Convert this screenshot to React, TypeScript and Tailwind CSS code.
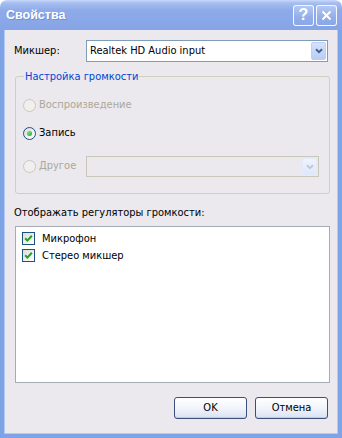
import React from "react";

const bodyBg = "bg-[#ebe9ed]";

function DropArrow({ disabled }: { disabled?: boolean }) {
  return (
    <span
      className={`flex w-[15px] items-center justify-center rounded-[2px] border ${
        disabled
          ? "border-[#e1eafb] bg-[linear-gradient(180deg,#eef3fd,#dfe8fb)]"
          : "border-[#bccff7] bg-[linear-gradient(180deg,#d4e2fd,#b7cdf6)]"
      }`}
    >
      <svg width="8" height="6" viewBox="0 0 8 6">
        <path
          d="M1 1.2 L4 4.2 L7 1.2"
          fill="none"
          stroke={disabled ? "#c1c9d8" : "#4d6185"}
          strokeWidth="2"
        />
      </svg>
    </span>
  );
}

interface ComboProps {
  value?: string;
  disabled?: boolean;
  className?: string;
}

function Combo({ value, disabled, className }: ComboProps) {
  return (
    <div
      className={`flex border p-px ${
        disabled ? "border-[#c9c7ba] bg-[#ebe9ed]" : "border-[#7f9db9] bg-white"
      } ${className ?? ""}`}
    >
      <span className="flex-1 truncate pl-[2px] leading-[18px]">{value}</span>
      <DropArrow disabled={disabled} />
    </div>
  );
}

function Radio({ checked, disabled }: { checked?: boolean; disabled?: boolean }) {
  return (
    <span
      className={`flex h-[13px] w-[13px] shrink-0 items-center justify-center rounded-full border ${
        disabled
          ? "border-[#cac8bb] bg-[#f1f0ef]"
          : "border-[#1c5180] bg-[linear-gradient(135deg,#dcdcd7,#ffffff)]"
      }`}
    >
      {checked && (
        <span className="h-[5px] w-[5px] rounded-full bg-[radial-gradient(circle_at_35%_35%,#7be07b,#21a121)]" />
      )}
    </span>
  );
}

interface RadioRowProps {
  label: string;
  checked?: boolean;
  disabled?: boolean;
}

function RadioRow({ label, checked, disabled }: RadioRowProps) {
  return (
    <div className="flex items-center gap-[3px]">
      <Radio checked={checked} disabled={disabled} />
      <span className={disabled ? "text-[#aca899]" : "text-black"}>{label}</span>
    </div>
  );
}

function CheckItem({ label }: { label: string }) {
  return (
    <div className="flex h-[17px] items-start gap-[7px]">
      <span className="flex h-[13px] w-[13px] items-center justify-center border border-[#1c5180] bg-[linear-gradient(135deg,#dcdcd7,#ffffff)]">
        <svg width="9" height="9" viewBox="0 0 9 9">
          <path d="M1.2 4.2 L3.4 6.6 L7.8 1.8" fill="none" stroke="#21a121" strokeWidth="2" />
        </svg>
      </span>
      <span className="leading-[13px]">{label}</span>
    </div>
  );
}

function TitleButton({ children }: { children: React.ReactNode }) {
  return (
    <span className="flex h-[21px] w-[21px] items-center justify-center rounded-[3px] border border-white/90 bg-[linear-gradient(180deg,#b3c8f4,#92adea_60%,#8aa7e8)]">
      {children}
    </span>
  );
}

function TitleBar() {
  return (
    <div className="flex h-[30px] items-center justify-between rounded-t-[7px] bg-[linear-gradient(180deg,#c9d9fb_0%,#a5bdf1_10%,#8eaae8_35%,#86a4e6_100%)] pl-[6px] pr-[5px]">
      <span className="pt-[1px] font-['Liberation_Sans',Arial,sans-serif] text-[12.5px] font-bold text-white [text-shadow:1px_1px_0_#6f8fd6]">
        Свойства
      </span>
      <div className="flex gap-[2px]">
        <TitleButton>
          <span className="font-['Liberation_Sans',Arial,sans-serif] text-[16px] font-bold leading-none text-white">
            ?
          </span>
        </TitleButton>
        <TitleButton>
          <svg width="11" height="11" viewBox="0 0 11 11">
            <path d="M1.5 1.5 L9.5 9.5 M9.5 1.5 L1.5 9.5" stroke="#fff" strokeWidth="2" />
          </svg>
        </TitleButton>
      </div>
    </div>
  );
}

function XpButton({ label }: { label: string }) {
  return (
    <button
      type="button"
      className="h-[22px] w-[73px] rounded-[3px] border border-[#3b4f7d] bg-[linear-gradient(180deg,#ffffff_0%,#f1f4fb_50%,#d9e1f2_100%)] text-black shadow-[inset_0_-1px_0_#c3cce3]"
    >
      {label}
    </button>
  );
}

export default function App() {
  return (
    <div className="flex h-[438px] w-[342px] flex-col bg-white font-['DejaVu_Sans_Condensed','Liberation_Sans',Arial,sans-serif] text-[11px] text-black">
      <TitleBar />
      <div
        className={`flex flex-1 flex-col border-x-4 border-b-4 border-[#7ea3e6] ${bodyBg} pl-[10px] pr-[8px] pt-[10px] shadow-[inset_1px_0_0_#b3cbf4,inset_-1px_0_0_#b3cbf4,inset_0_-1px_0_#b3cbf4]`}
      >
        <div className="flex h-[22px] items-center">
          <span className="w-[72px]">Микшер:</span>
          <Combo value="Realtek HD Audio input" className="h-[22px] w-[242px]" />
        </div>

        <div className="relative ml-px mt-[14px] flex h-[118px] w-[315px] flex-col rounded-[3px] border border-[#d0d0bf] pl-[7px] pt-[21px]">
          <span className={`absolute -top-[8px] left-[8px] px-px text-[#0046d5] ${bodyBg}`}>
            Настройка громкости
          </span>
          <div className="flex h-[14px] items-center">
            <RadioRow label="Воспроизведение" disabled />
          </div>
          <div className="mt-[14px] flex h-[14px] items-center">
            <RadioRow label="Запись" checked />
          </div>
          <div className="mt-[16px] flex h-[21px] items-center">
            <div className="w-[63px]">
              <RadioRow label="Другое" disabled />
            </div>
            <Combo disabled className="h-[21px] w-[233px]" />
          </div>
        </div>

        <div className="mt-[12px] h-[14px] leading-[14px]">Отображать регуляторы громкости:</div>

        <div className="ml-px mt-[6px] flex h-[157px] w-[315px] flex-col border border-[#a5acb5] bg-white pl-[6px] pt-[5px]">
          <CheckItem label="Микрофон" />
          <CheckItem label="Стерео микшер" />
        </div>

        <div className="mr-[2px] mt-[14px] flex justify-end gap-[8px]">
          <XpButton label="OK" />
          <XpButton label="Отмена" />
        </div>
      </div>
    </div>
  );
}
